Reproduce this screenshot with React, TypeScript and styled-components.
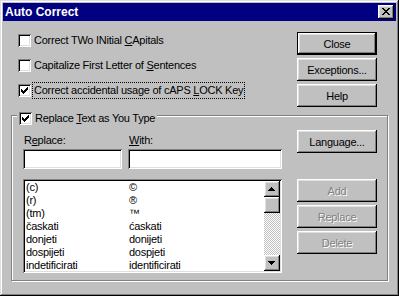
import React from 'react'
import styled, { createGlobalStyle, css } from 'styled-components'

const GlobalStyle = createGlobalStyle`
  html, body {
    margin: 0;
    padding: 0;
    background: #c0c0c0;
  }
  body {
    font-family: "Liberation Sans", Arial, sans-serif;
    font-size: 11px;
  }
`

const raised = 'inset -1px -1px #000, inset 1px 1px #fff, inset -2px -2px #808080, inset 2px 2px #dfdfdf'
const sunken = 'inset 1px 1px #808080, inset -1px -1px #fff, inset 2px 2px #000, inset -2px -2px #dfdfdf'

const Window = styled.div`
  box-sizing: border-box;
  width: 399px;
  height: 296px;
  padding: 3px;
  background: #c0c0c0;
  box-shadow: inset -1px -1px #000, inset 1px 1px #dfdfdf, inset -2px -2px #808080, inset 2px 2px #fff;
  display: flex;
  flex-direction: column;
  color: #000;
  letter-spacing: -0.25px;
`

const TitleBar = styled.div`
  height: 18px;
  background: #000080;
  display: flex;
  align-items: center;
  justify-content: space-between;
  padding: 0 2px 0 2px;
`

const Title = styled.span`
  color: #fff;
  font-weight: bold;
  font-size: 12px;
  letter-spacing: 0;
`

const CloseBox = styled.div`
  box-sizing: border-box;
  width: 16px;
  height: 14px;
  background: #c0c0c0;
  box-shadow: ${raised};
  display: flex;
  align-items: center;
  justify-content: center;
  padding: 0 1px 1px 0;
`

const Body = styled.div`
  flex: 1;
  display: flex;
  flex-direction: column;
  padding: 11px 8px 0 8px;
`

const TopSection = styled.div`
  display: flex;
  justify-content: space-between;
  padding: 0 11px 0 7px;
`

const CheckList = styled.div`
  display: flex;
  flex-direction: column;
  gap: 8px;
`

const CheckRow = styled.div`
  display: flex;
  align-items: center;
  height: 17px;
`

const Box = styled.div`
  box-sizing: border-box;
  width: 13px;
  height: 13px;
  flex: none;
  background: #fff;
  box-shadow: ${sunken};
  display: flex;
  align-items: center;
  justify-content: center;
  margin-right: 3px;
`

const Label = styled.span<{ $focused?: boolean }>`
  white-space: nowrap;
  line-height: 13px;
  ${p => p.$focused && css`
    border: 1px dotted #000;
    padding: 1px 1px;
    margin-left: -2px;
  `}
`

const U = styled.span`
  text-decoration: underline;
`

const ButtonColumn = styled.div`
  display: flex;
  flex-direction: column;
  gap: 3px;
  width: 80px;
`

const Button = styled.button<{ $default?: boolean; $gapAbove?: number }>`
  box-sizing: border-box;
  width: 80px;
  height: 23px;
  padding: 0;
  border: none;
  background: #c0c0c0;
  font: inherit;
  letter-spacing: inherit;
  color: ${p => (p.disabled ? '#808080' : '#000')};
  text-shadow: ${p => (p.disabled ? '1px 1px 0 #fff' : 'none')};
  margin-top: ${p => p.$gapAbove ?? 0}px;
  box-shadow: ${p =>
    p.$default
      ? 'inset 0 0 0 1px #000, inset -2px -2px #000, inset 2px 2px #fff, inset -3px -3px #808080, inset 3px 3px #dfdfdf'
      : raised};
`

const GroupBox = styled.div`
  margin-top: 8px;
  border: 1px solid #808080;
  box-shadow: 1px 1px 0 #fff, inset 1px 1px 0 #fff;
  padding: 0 10px 7px 11px;
`

const Legend = styled.div`
  display: flex;
  align-items: center;
  width: fit-content;
  height: 17px;
  margin: -6px 0 0 -6px;
  padding: 0 2px;
  background: #c0c0c0;
`

const GroupContent = styled.div`
  display: flex;
  justify-content: space-between;
  margin-top: 3px;
`

const LeftColumn = styled.div`
  width: 259px;
  display: flex;
  flex-direction: column;
`

const FieldRow = styled.div`
  display: flex;
  gap: 6px;
`

const Field = styled.div<{ $width: number }>`
  width: ${p => p.$width}px;
  display: flex;
  flex-direction: column;
`

const FieldLabel = styled.label`
  line-height: 13px;
  margin: 4px 0 2px 1px;
`

const TextInput = styled.input`
  box-sizing: border-box;
  width: 100%;
  height: 20px;
  border: none;
  outline: none;
  background: #fff;
  box-shadow: ${sunken};
  padding: 0 3px;
  font: inherit;
`

const ListBox = styled.div`
  box-sizing: border-box;
  margin-top: 10px;
  height: 94px;
  padding: 2px;
  background: #fff;
  box-shadow: ${sunken};
  display: flex;
`

const Rows = styled.div`
  flex: 1;
  padding: 0 1px;
  overflow: hidden;
`

const Row = styled.div`
  display: grid;
  grid-template-columns: 103px 1fr;
  height: 13px;
  line-height: 13px;
  white-space: nowrap;
`

const ScrollBar = styled.div`
  width: 16px;
  display: flex;
  flex-direction: column;
`

const ScrollButton = styled.div<{ $thumb?: boolean }>`
  box-sizing: border-box;
  width: 16px;
  height: 16px;
  flex: none;
  background: #c0c0c0;
  box-shadow: ${raised};
  display: flex;
  align-items: center;
  justify-content: center;
  padding: 0 1px 1px 0;
`

const Track = styled.div`
  flex: 1;
  background: repeating-conic-gradient(#c0c0c0 0% 25%, #fff 0% 50%) 0 0 / 2px 2px;
`

const CheckMark = () => (
  <svg width="7" height="7" viewBox="0 0 7 7" shapeRendering="crispEdges">
    <path
      fill="#000"
      d="M6 0h1v1h-1z M5 1h2v1h-2z M0 2h1v1h-1z M4 2h3v1h-3z M0 3h2v1h-2z M3 3h3v1h-3z M0 4h5v1h-5z M1 5h3v1h-3z M2 6h1v1h-1z"
    />
  </svg>
)

const CloseGlyph = () => (
  <svg width="8" height="7" viewBox="0 0 8 7" shapeRendering="crispEdges">
    <path
      fill="#000"
      d="M0 0h2v1h-2z M6 0h2v1h-2z M1 1h2v1h-2z M5 1h2v1h-2z M2 2h4v1h-4z M3 3h2v1h-2z M2 4h4v1h-4z M1 5h2v1h-2z M5 5h2v1h-2z M0 6h2v1h-2z M6 6h2v1h-2z"
    />
  </svg>
)

const Arrow = ({ down }: { down?: boolean }) => (
  <svg width="7" height="4" viewBox="0 0 7 4" shapeRendering="crispEdges">
    <path
      fill="#000"
      d={down
        ? 'M0 0h7v1h-7z M1 1h5v1h-5z M2 2h3v1h-3z M3 3h1v1h-1z'
        : 'M3 0h1v1h-1z M2 1h3v1h-3z M1 2h5v1h-5z M0 3h7v1h-7z'}
    />
  </svg>
)

const entries = [
  ['(c)', '©'],
  ['(r)', '®'],
  ['(tm)', '™'],
  ['časkati', 'ćaskati'],
  ['donjeti', 'donijeti'],
  ['dospijeti', 'dospjeti'],
  ['indetificirati', 'identificirati'],
]

function Check({ checked, children, focused }: { checked?: boolean; children: React.ReactNode; focused?: boolean }) {
  return (
    <CheckRow>
      <Box>{checked && <CheckMark />}</Box>
      <Label $focused={focused}>{children}</Label>
    </CheckRow>
  )
}

export default function App() {
  return (
    <>
      <GlobalStyle />
      <Window>
        <TitleBar>
          <Title>Auto Correct</Title>
          <CloseBox><CloseGlyph /></CloseBox>
        </TitleBar>
        <Body>
          <TopSection>
            <CheckList>
              <Check>Correct TWo INitial <U>C</U>Apitals</Check>
              <Check>Capitalize First Letter of <U>S</U>entences</Check>
              <Check checked focused>Correct accidental usage of cAPS <U>L</U>OCK Key</Check>
            </CheckList>
            <ButtonColumn>
              <Button $default>Close</Button>
              <Button>Exceptions...</Button>
              <Button>Help</Button>
            </ButtonColumn>
          </TopSection>

          <GroupBox>
            <Legend>
              <Box><CheckMark /></Box>
              <Label>Replace <U>T</U>ext as You Type</Label>
            </Legend>
            <GroupContent>
              <LeftColumn>
                <FieldRow>
                  <Field $width={99}>
                    <FieldLabel>R<U>e</U>place:</FieldLabel>
                    <TextInput readOnly />
                  </Field>
                  <Field $width={154}>
                    <FieldLabel><U>W</U>ith:</FieldLabel>
                    <TextInput readOnly />
                  </Field>
                </FieldRow>
                <ListBox>
                  <Rows>
                    {entries.map(([from, to]) => (
                      <Row key={from}>
                        <span>{from}</span>
                        <span>{to}</span>
                      </Row>
                    ))}
                  </Rows>
                  <ScrollBar>
                    <ScrollButton><Arrow /></ScrollButton>
                    <ScrollButton $thumb />
                    <Track />
                    <ScrollButton><Arrow down /></ScrollButton>
                  </ScrollBar>
                </ListBox>
              </LeftColumn>
              <ButtonColumn>
                <Button>Language...</Button>
                <Button disabled $gapAbove={23}>Add</Button>
                <Button disabled>Replace</Button>
                <Button disabled>Delete</Button>
              </ButtonColumn>
            </GroupContent>
          </GroupBox>
        </Body>
      </Window>
    </>
  )
}
